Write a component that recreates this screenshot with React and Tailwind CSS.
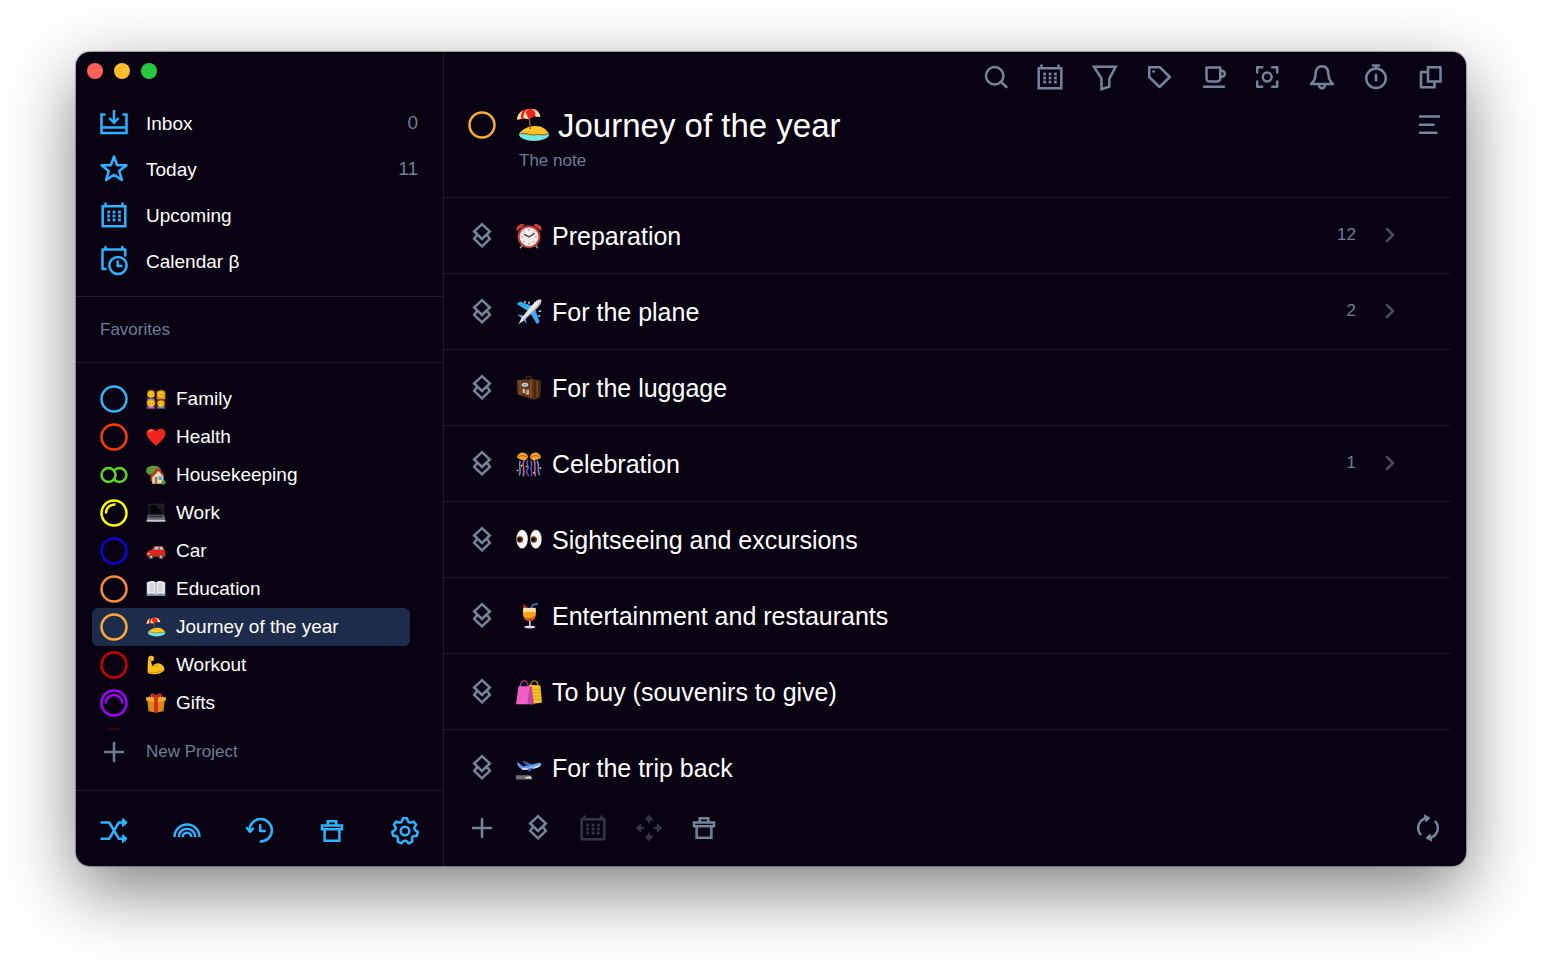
import React from "react";

const Icon = ({ children, className = "size-7" }) => (
    <svg viewBox="0 0 28 28" className={`${className} shrink-0 overflow-visible`} fill="none" stroke="currentColor"
        strokeWidth="2.5" strokeLinecap="round" strokeLinejoin="round" aria-hidden="true">
        {children}
    </svg>
);

// seven-toothed cog outline
const cogPoints = Array.from({ length: 7 }, (_, i) =>
    [[-20, 9.8], [-14, 11], [-9, 12.8], [9, 12.8], [14, 11], [20, 9.8]].map(([offset, radius]) => {
        const angle = ((i * 360) / 7 + offset - 90) * (Math.PI / 180);
        return `${(14 + radius * Math.cos(angle)).toFixed(2)},${(14 + radius * Math.sin(angle)).toFixed(2)}`;
    }).join(" ")
).join(" ");

const icons = {
    inbox: (
        <g strokeLinecap="butt" strokeLinejoin="miter">
            <path d="M5.5 5.6H1.5V24h25V5.6h-4M1.5 18.4h25" />
            <path d="M14 1v12.5M9.3 9l4.7 4.8L18.7 9" />
        </g>
    ),
    star: <path d="M14 1.5 17.2 10.2H26.5L19.2 15.9 21.9 25 14 19.7 6.1 25 8.8 15.9 1.5 10.2h9.3z" />,
    calendar: (
        <>
            <path d="M2.7 5.2h22.6v20H2.7zM5.5 5V2.5M22.5 5V2.5" strokeLinejoin="miter" />
            {[8.6, 14, 19.4].map(x => [11, 15, 19].map(y => (
                <rect key={`${x}-${y}`} x={x - 1.4} y={y - 1.4} width="2.8" height="2.8" fill="currentColor" stroke="none" />
            )))}
        </>
    ),
    calendarClock: (
        <>
            <path d="M5.5 22H2.5V2.5h22.8v6M5.5 2V0M22.3 2V0" />
            <circle cx="18" cy="18.5" r="8.6" />
            <path d="M17.7 14.5v4.5h3.6" />
        </>
    ),
    search: (
        <>
            <circle cx="12.7" cy="12.7" r="8.7" />
            <path d="M19 19l5.5 5.2" />
        </>
    ),
    funnel: <path d="M2.9 3.7h21.8L18.3 15.7v7.9l-7.8 2.7V15.7z" strokeLinejoin="miter" />,
    tag: (
        <>
            <path d="M4.2 4.2h10.6L24.8 14 14.5 24 4.2 14z" />
            <circle cx="8.6" cy="8.6" r="1.4" fill="currentColor" stroke="none" />
        </>
    ),
    cup: (
        <>
            <path d="M7.5 4.5h13.8v11a3 3 0 0 1-3 3h-7.8a3 3 0 0 1-3-3z" />
            <path d="M21.5 7.8h1.3a2.9 2.9 0 0 1 0 6h-1.3M5 23.7h20" />
        </>
    ),
    focus: (
        <>
            <path d="M4.2 10.5V4.2h6M18.2 4.2h6v6.3M24.2 17.5v6.3h-6M10.2 23.8h-6v-6.3" strokeLinecap="butt" />
            <circle cx="14.2" cy="14" r="4.4" />
        </>
    ),
    bell: (
        <>
            <path d="M3 21c3.5-2.800 4.500-5.500 4.700-10.500C7.900 5.600 10.500 3.200 14 3.200s6.100 2.400 6.300 7.300c.2 5 1.200 7.700 4.700 10.500z" />
            <path d="M11 22a3 3.300 0 0 0 6 0" />
        </>
    ),
    stopwatch: (
        <>
            <circle cx="14" cy="15.3" r="9.8" />
            <path d="M11 2.5h6M14 3v2M14 12v5.5" />
        </>
    ),
    windows: (
        <g strokeLinejoin="miter">
            <path d="M12 4.2h12.5v14.4H12z" />
            <path d="M11.5 9H5v15.200h13.500V19" />
        </g>
    ),
    menu: <path d="M5 5.5h19M5 13.700h13.500M5 21.700h16.500" />,
    stack: <path d="M14 2.200 21.800 9.500 14 17 6.200 9.500zM9 13 6.200 16.800 14 24.300l7.800-7.500L19 13" strokeLinejoin="miter" />,
    plus: <path d="M14 5v18M5 14h18" />,
    move: (
        <path d="M14 8.500V5M14 23v-3.500M8.500 14H5M23 14h-3.500M11 5.500 14 1.800l3 3.700zM11 22.500l3 3.700 3-3.700zM5.500 11 1.800 14l3.700 3zM22.500 11l3.700 3-3.700 3z"
            fill="currentColor" strokeWidth="1.800" />
    ),
    trash: (
        <path d="M4 8.500h20v3.800H4zM9.800 8V4.300h8.400V8M6.600 12.500v11.300h14.800V12.500" strokeLinejoin="miter" />
    ),
    sync: (
        <>
            <path d="M6.500 20.300A9.800 9.800 0 0 1 12.500 4.300M21.500 7.700A9.800 9.800 0 0 1 15.500 23.700" />
            <path d="M10.500 1l5.500 3-3.800 3.500zM17.500 27l-5.500-3 3.800-3.500z" fill="currentColor" strokeWidth="1" />
        </>
    ),
    shuffle: (
        <>
            <path d="M1.500 5.500h7.800l9.500 16.200h6M1.500 21.700h7.800l9.500-16.200h6" />
            <path d="M22.800 2.200l3.700 3.300-3.700 3.300zM22.800 18.400l3.700 3.300-3.700 3.300z" fill="currentColor" strokeWidth="1.800" />
        </>
    ),
    rainbow: <path d="M1.500 20a12.500 12.500 0 0 1 25 0M5.700 20a8.300 8.300 0 0 1 16.600 0M9.700 20a4.300 4.300 0 0 1 8.600 0" strokeLinecap="butt" />,
    history: (
        <>
            <path d="M3.500 14A11.200 11.200 0 1 1 14.700 24.500" />
            <path d="M1 11l3 3.800 3-3.200M14.200 8.200v5.800h4.500" />
        </>
    ),
    cog: (
        <>
            <polygon points={cogPoints} />
            <circle cx="14" cy="14" r="4.300" />
        </>
    ),
};

const IconButton = ({ name, label, className = "" }) => (
    <button type="button" aria-label={label} className={className}>
        <Icon>{icons[name]}</Icon>
    </button>
);

const pictures = {
    family: (
        <>
            <path d="M1 14h14v17H1z" fill="#2b3fb8" />
            <path d="M17 13h14v18H17z" fill="#b5152b" />
            <path d="M2 3q6-4 12 0v10H2z" fill="#9a6410" />
            <circle cx="8" cy="8.5" r="5.5" fill="#fcc21b" />
            <path d="M17 4q7-5 14 0v12H17z" fill="#d98b10" />
            <circle cx="24" cy="9" r="5" fill="#fcc21b" />
            <path d="M1 31q7-8 14 0z" fill="#e05bb5" />
            <circle cx="8" cy="22" r="7" fill="#d98b10" />
            <circle cx="8" cy="23" r="5" fill="#fcc21b" />
            <path d="M17 31q7-8 14 0z" fill="#25a4d8" />
            <circle cx="24" cy="22" r="6.5" fill="#7a4d10" />
            <circle cx="24" cy="23.5" r="5.3" fill="#fcc21b" />
            <path d="M5.5 8h1M9.5 8h1M22 9h1M25.5 9h1M5.5 23h1M9.5 23h1M21.5 23h1M25.5 23h1" stroke="#4a2b08" strokeWidth="1.4" />
        </>
    ),
    heart: (
        <>
            <path d="M16 30C8 23 1 17 1 10 1 2 12 0 16 7c4-7 15-5 15 3 0 7-7 13-15 20z" fill="#f0251b" />
            <path d="M4 9c0-4 5-6 8-3-4 0-6 2-8 3z" fill="#ff8a7a" />
        </>
    ),
    house: (
        <>
            <ellipse cx="12" cy="9" rx="12" ry="8" fill="#5c9a3a" />
            <path d="M7 14h4v12H7z" fill="#7b4a20" />
            <path d="M10 16 19 8l9 8v14H10z" fill="#f1dcb5" />
            <path d="M8 17 17 5l5 1 8 12-2 1-8-10-9 10z" fill="#b4372a" />
            <path d="M14 19h4v11h-4z" fill="#a86b3c" />
            <path d="M20 18h6v6h-6z" fill="#58a9e0" />
            <circle cx="28" cy="28" r="3.5" fill="#4b9b35" />
        </>
    ),
    laptop: (
        <>
            <path d="M4 1h25v18H4z" fill="#25252b" />
            <path d="M6 3h21v14H6z" fill="#050508" />
            <path d="M16 3h11v14z" fill="#1c1c25" />
            <path d="M3 19h26l2 9H1z" fill="#6d6d75" />
            <path d="M5 20h22v3H4z" fill="#303037" />
            <path d="M1 27h30v3H1z" fill="#c9cad0" />
        </>
    ),
    car: (
        <>
            <path d="M1 22c0-6 4-7 8-8l5-6h12l4 7 1 10H2z" fill="#e3231c" />
            <path d="M12 13l3-4h5v5zM22 9h4l2 5h-6z" fill="#8ed0ee" />
            <circle cx="8" cy="25" r="4" fill="#555" />
            <circle cx="24" cy="25" r="4" fill="#555" />
            <circle cx="8" cy="25" r="2" fill="#bbb" />
            <circle cx="24" cy="25" r="2" fill="#bbb" />
            <path d="M2 20l4-1v2H2z" fill="#ffe28a" />
        </>
    ),
    book: (
        <>
            <path d="M1 5h30v22H1z" fill="#8499ab" />
            <path d="M2 5q8-4 14 0 6-4 14 0v19q-8-3-14 1-6-4-14-1z" fill="#eceef1" />
            <path d="M16 5v20" stroke="#8d949b" strokeWidth="1.5" />
            <path d="M5 8h8M5 11h8M5 14h8M5 17h8M5 20h8M19 8h8M19 11h8M19 14h8M19 17h8M19 20h8" stroke="#a9afb5" />
        </>
    ),
    beach: (
        <>
            <ellipse cx="17" cy="25" rx="14" ry="6" fill="#6fe8e0" />
            <path d="M4 24c2-4 7-7 14-7 7 0 11 3 12 7-3 3-6-1-10 1-5 2-9-1-16-1z" fill="#ffc526" />
            <path d="M4 24c6-1 10 3 15 1 4-1 7 2 11-1" fill="none" stroke="#9a6a1c" strokeWidth="1" />
            <path d="M12 4l1.500 16" stroke="#8b5a2b" strokeWidth="1.300" />
            <path d="M1 11C1 5 6 1 12 1c6-1 10 1 11 7l-5-.500-6 3-5-.500z" fill="#e8281e" />
            <path d="M12 1C8 3 7 6 7 9.500l5 1L9 4z" fill="#f6e6ae" />
            <path d="M14 1c4 1 5 4 4 7l5 .500C22 4 19 1 14 1zM7 2C3 4 1 7 1 11l4-1c-1-3 0-6 2-8z" fill="#f6e6ae" />
        </>
    ),
    muscle: (
        <>
            <path d="M4 3c3-3 7-2 9 1l-1 5-4 1 2 8c4-5 10-6 15-3 4 3 6 8 3 11-6 5-17 6-25 3C2 22 3 10 4 3z" fill="#fcc21b" />
            <path d="M11 19c3-3 6-3 8-1M8 10l-1-4M5 28c6 1 14 0 22-3" fill="none" stroke="#d48d0a" strokeWidth="1.5" />
        </>
    ),
    gift: (
        <>
            <path d="M2 11h28l-2 18-12 2-12-2z" fill="#d98a16" />
            <path d="M0 7l16-3 16 3v5l-16 3L0 12z" fill="#f0a928" />
            <path d="M13 4h6v27h-6z" fill="#d92b24" />
            <path d="M16 7C11 8 6 6 7 2c3-3 8 0 9 5 1-5 6-8 9-5 1 4-4 6-9 5z" fill="#e8382e" />
            <path d="M9 3l5 3M23 3l-5 3" stroke="#8f130f" strokeWidth="1.5" />
        </>
    ),
    alarm: (
        <>
            <path d="M5 31l4-5M27 31l-4-5" stroke="#8f8f95" strokeWidth="2" />
            <path d="M1 10c-2-6 4-11 10-8zM31 10c2-6-4-11-10-8z" fill="#c8403c" />
            <circle cx="16" cy="17" r="14" fill="#c8403c" />
            <circle cx="16" cy="17" r="11.5" fill="#f1eeee" />
            <path d="M16 7v3M16 24v3M6 17h3M23 17h3M9 10l2 2M23 10l-2 2M9 24l2-2M23 24l-2-2" stroke="#dc7a70" strokeWidth="1.2" />
            <path d="M10 14l6 3 7-4" fill="none" stroke="#333" strokeWidth="1.4" />
        </>
    ),
    plane: (
        <>
            <path d="M1 6l4-3 16 6-6 6zM23 11l6 17-3 3-9-14zM2 19l7 1-2 4zM12 24l1 7-4-6z" fill="#33aef0" />
            <path d="M31 1c1 3-1 6-4 9L10 26l-7 5 4-8L22 5c3-3 6-5 9-4z" fill="#e9e9ec" />
            <path d="M30 3c0 3-2 5-5 8L9 26" fill="none" stroke="#a6a7ad" strokeWidth="1.5" />
            <path d="M11 2v3M16 3v3M28 15h3M27 21h3" stroke="#c4c4cb" strokeWidth="1.8" />
        </>
    ),
    luggage: (
        <>
            <path d="M12 6c0-6 7-6 7 0" fill="none" stroke="#4d3018" strokeWidth="1.5" />
            <path d="M1 6l21-1v25L2 24z" fill="#65391b" />
            <path d="M22 5l9 2-1 20-8 4z" fill="#4a2814" />
            <path d="M5 6v19M18 6v23M26 7v21" stroke="#8a552b" strokeWidth="1.3" />
            <ellipse cx="11" cy="12" rx="4" ry="2.5" fill="#ccd5d8" />
            <path d="M8 17h3v5H8zM12 18h4v6h-4z" fill="#c7b99e" />
            <path d="M9 12h4M13 19v3" stroke="#3b5d9b" />
        </>
    ),
    confetti: (
        <>
            <path d="M5 12C3 20 7 22 4 30M26 12c4 7-1 11 3 18" fill="none" stroke="#4a8ee8" strokeWidth="2" />
            <path d="M10 11c-4 8 2 10-1 20M22 11c4 8-1 10 2 20" fill="none" stroke="#e65572" strokeWidth="2" />
            <path d="M15 11c-5 5 3 7-1 12s3 5 1 8M18 12c4 5-2 8 1 12s-2 5 0 7" fill="none" stroke="#4f63cf" strokeWidth="1.7" />
            <path d="M1 8C3 0 12 0 15 7c-2 6-8 5-14 1zM31 8C29 0 20 0 17 7c2 6 8 5 14 1z" fill="#f4a12e" />
            <path d="M3 7q6-3 11 1M29 7q-6-3-11 1" fill="none" stroke="#c16d13" strokeWidth="1.3" />
            <path d="M1 24h2M12 19h2M21 27h2M29 21h2M6 18h2" stroke="#f4cf3e" strokeWidth="2" />
        </>
    ),
    eyes: (
        <>
            <ellipse cx="7.5" cy="15" rx="7" ry="11.5" fill="#f7f7f7" />
            <ellipse cx="24.5" cy="15" rx="7" ry="11.5" fill="#f7f7f7" />
            <circle cx="4.8" cy="15.5" r="4" fill="#6b3c16" />
            <circle cx="21.8" cy="15.5" r="4" fill="#6b3c16" />
            <circle cx="4.5" cy="15.5" r="2.2" fill="#0d0806" />
            <circle cx="21.5" cy="15.5" r="2.2" fill="#0d0806" />
        </>
    ),
    cocktail: (
        <>
            <path d="M18 7l3-5 6-1" fill="none" stroke="#2f8fd8" strokeWidth="1.8" />
            <path d="M9 1l7 6-7 3z" fill="#d8271f" />
            <path d="M9 6h15c1 4 1 10-2 14-3 3-8 3-11 0-3-4-3-10-2-14z" fill="#f4a51d" />
            <path d="M9 6h15v5H9z" fill="#f8dfa2" />
            <path d="M9 16c4 4 11 4 15-1 0 4-3 7-7 7.500-4 0-7-2.500-8-6.500z" fill="#dc4716" />
            <path d="M16 22h2v6h-2z" fill="#c9ccd2" />
            <ellipse cx="17" cy="29.5" rx="7" ry="1.8" fill="#d8dadf" />
        </>
    ),
    bags: (
        <>
            <path d="M18 9c0-9 9-9 9 0" fill="none" stroke="#b98a12" strokeWidth="1.6" />
            <path d="M16 7l14 1 2 21-14 2z" fill="#f5c322" />
            <path d="M19 13h11M19 17h12M19 21h12M20 25h11" stroke="#d49a12" />
            <path d="M5 12C5-1 15-1 15 11" fill="none" stroke="#b22f92" strokeWidth="1.6" />
            <path d="M3 9h16l3 22H0z" fill="#f05fc7" />
            <path d="M19 9l3 22-8-1 3-21z" fill="#c13fa0" />
        </>
    ),
    takeoff: (
        <>
            <path d="M1 9c3 0 5 4 8 5l17-4c4-1 6 0 5 2-3 4-14 6-22 6-5-1-7-5-8-9z" fill="#5b9ff0" />
            <path d="M8 16c8 1 16-2 23-4-3 5-16 7-24 6z" fill="#e0e7f2" />
            <path d="M13 13L8 8l2-1 10 5zM14 17l9-2-7 6z" fill="#3465b8" />
            <path d="M0 25h18l2 5H0z" fill="#6d6d75" />
            <path d="M12 27l6-1 2 3h-9z" fill="#d9d9de" />
        </>
    ),
};

const Picture = ({ name, className }) => (
    <svg viewBox="0 0 32 32" className={`${className} shrink-0`} aria-hidden="true">{pictures[name]}</svg>
);

// Project marker: a ring, a linked pair of rings, or a ring with an inner progress arc
const Ring = ({ color, kind }) => (
    <svg viewBox="0 0 28 28" className="size-7 shrink-0" fill="none" stroke={color} strokeWidth="2.5" aria-hidden="true">
        {kind === "linked" ? (
            <>
                <circle cx="8.5" cy="14" r="7" />
                <path d="M14.4 9.100a7 7 0 1 1 0 9.800" strokeLinecap="round" />
            </>
        ) : (
            <circle cx="14" cy="14" r="12.5" />
        )}
        {kind === "quarter" && <path d="M6 14.500a8.500 8.500 0 0 1 9.500-9" />}
        {kind === "half" && <path d="M5.600 14.500a8.400 8.400 0 0 1 16.800 0" />}
    </svg>
);

const navItems = [
    { icon: "inbox", label: "Inbox", count: 0 },
    { icon: "star", label: "Today", count: 11 },
    { icon: "calendar", label: "Upcoming" },
    { icon: "calendarClock", label: "Calendar β" },
];

const projects = [
    { name: "Family", picture: "family", color: "#35b4f8" },
    { name: "Health", picture: "heart", color: "#fb3c08" },
    { name: "Housekeeping", picture: "house", color: "#5cdb1b", kind: "linked" },
    { name: "Work", picture: "laptop", color: "#fdfb02", kind: "quarter" },
    { name: "Car", picture: "car", color: "#1103d6" },
    { name: "Education", picture: "book", color: "#fd8b3c" },
    { name: "Journey of the year", picture: "beach", color: "#fba937", active: true },
    { name: "Workout", picture: "muscle", color: "#cd0303" },
    { name: "Gifts", picture: "gift", color: "#a004fb", kind: "half" },
];

const sections = [
    { name: "Preparation", picture: "alarm", count: 12 },
    { name: "For the plane", picture: "plane", count: 2 },
    { name: "For the luggage", picture: "luggage" },
    { name: "Celebration", picture: "confetti", count: 1 },
    { name: "Sightseeing and excursions", picture: "eyes" },
    { name: "Entertainment and restaurants", picture: "cocktail" },
    { name: "To buy (souvenirs to give)", picture: "bags" },
    { name: "For the trip back", picture: "takeoff" },
];

const toolbar = [
    ["search", "Search"],
    ["calendar", "Calendar"],
    ["funnel", "Filter"],
    ["tag", "Tags"],
    ["cup", "Break"],
    ["focus", "Focus"],
    ["bell", "Reminders"],
    ["stopwatch", "Timer"],
    ["windows", "New window"],
];

const Sidebar = () => (
    <aside className="flex w-[368px] shrink-0 flex-col border-r border-[#211c2c]">
        <div className="flex gap-[11px] pt-[11px] pl-[11px]">
            <button type="button" aria-label="Close" className="size-4 rounded-full bg-[#ff5f57]" />
            <button type="button" aria-label="Minimize" className="size-4 rounded-full bg-[#febc2e]" />
            <button type="button" aria-label="Zoom" className="size-4 rounded-full bg-[#28c840]" />
        </div>

        <nav className="mt-[21px] border-b border-[#211c2c] pr-[25px] pb-3 pl-6">
            {navItems.map(item => (
                <a key={item.label} href="#" className="flex h-[46px] items-center gap-[18px] text-[19px] text-white">
                    <span className="text-[#2ab4fd]"><Icon>{icons[item.icon]}</Icon></span>
                    <span className="flex-1 pt-0.5">{item.label}</span>
                    {item.count !== undefined && <span className="text-[#6b7f93]">{item.count}</span>}
                </a>
            ))}
        </nav>

        <h2 className="flex h-[66px] items-center border-b border-[#211c2c] pl-6 text-[17px] text-[#6b7f93]">Favorites</h2>

        {/* Projects */}
        <div className="pt-[17px] pr-[33px] pl-4">
            {projects.map(project => (
                <a key={project.name} href="#"
                    className={`flex h-[38px] items-center rounded-md pl-2 text-[19px] text-white ${project.active ? "bg-[#1e2c4b]" : ""}`}>
                    <Ring color={project.color} kind={project.kind} />
                    <Picture name={project.picture} className="ml-[18px] size-5" />
                    <span className="ml-[10px]">{project.name}</span>
                </a>
            ))}
            <div className="h-2 overflow-hidden pt-[5px] pl-2 opacity-15">
                <Ring color="#fb3c08" />
            </div>
        </div>

        <button type="button" className="flex h-[44px] items-center gap-[18px] pl-6 text-[17px] text-[#6b7f93]">
            <Icon>{icons.plus}</Icon>
            New Project
        </button>

        <div className="mt-auto flex justify-between border-t border-[#211c2c] px-6 pt-[26px] pb-[21px] text-[#2ab4fd]">
            <IconButton name="shuffle" label="Shuffle" />
            <IconButton name="rainbow" label="Areas" />
            <IconButton name="history" label="History" />
            <IconButton name="trash" label="Trash" />
            <IconButton name="cog" label="Settings" />
        </div>
    </aside>
);

const SectionRow = ({ section }) => (
    <li className="mr-4 flex h-[76px] items-center border-t border-[#211c2c] pr-[50px] pl-6 text-white">
        <span className="text-[#72869a]"><Icon>{icons.stack}</Icon></span>
        <Picture name={section.picture} className="ml-5 size-[26px]" />
        <span className="ml-[10px] flex-1 pt-0.5 text-[25px]">{section.name}</span>
        {section.count && (
            <button type="button" aria-label={`Expand ${section.name}`} className="flex items-center gap-6 pb-0.5 text-[17px] text-[#6b7f93]">
                {section.count}
                <svg viewBox="0 0 20 20" className="size-5" fill="none" stroke="#494d5c" strokeWidth="2.5"
                    strokeLinecap="round" strokeLinejoin="round" aria-hidden="true">
                    <path d="M7 4l6 6-6 6" />
                </svg>
            </button>
        )}
    </li>
);

const App = () => {
    return (
        <div className="flex min-h-screen bg-white px-[76px] pt-[52px] pb-[100px] font-['Liberation_Sans',Arial,sans-serif]">
            <div className="flex min-w-0 flex-1 overflow-hidden rounded-[14px] bg-[#090213] shadow-[0_0_1px_1px_rgba(0,0,0,0.3),0_24px_70px_rgba(0,0,0,0.5)]">
                <Sidebar />

                <main className="flex min-w-0 flex-1 flex-col text-[#72869a]">
                    <div className="flex w-[484px] justify-between self-end pt-[11px] pr-[22px]">
                        {toolbar.map(([name, label]) => (
                            <IconButton key={name} name={name} label={label} />
                        ))}
                    </div>

                    {/* Title */}
                    <header className="flex pt-4 pr-[23px] pb-[22px] pl-6">
                        <div className="pt-1"><Ring color="#fba937" /></div>
                        <div className="ml-5 flex-1">
                            <h1 className="flex h-9 items-center gap-2 text-[33px] text-white">
                                <Picture name="beach" className="size-[34px]" />
                                <span className="pt-0.5">Journey of the year</span>
                            </h1>
                            <p className="h-8 pt-0.5 pl-[3px] text-[17px] leading-8 text-[#6b7f93]">The note</p>
                        </div>
                        <IconButton name="menu" label="Project menu" className="self-start pt-1" />
                    </header>

                    <ul>
                        {sections.map(section => <SectionRow key={section.name} section={section} />)}
                    </ul>

                    <footer className="mt-auto flex justify-between pr-6 pb-6 pl-6">
                        <div className="flex w-[250px] justify-between">
                            <IconButton name="plus" label="Add task" />
                            <IconButton name="stack" label="Add section" />
                            <IconButton name="calendar" label="Schedule" className="text-[#343648]" />
                            <IconButton name="move" label="Move" className="text-[#343648]" />
                            <IconButton name="trash" label="Delete" />
                        </div>
                        <IconButton name="sync" label="Sync" />
                    </footer>
                </main>
            </div>
        </div>
    );
};

export default App;
